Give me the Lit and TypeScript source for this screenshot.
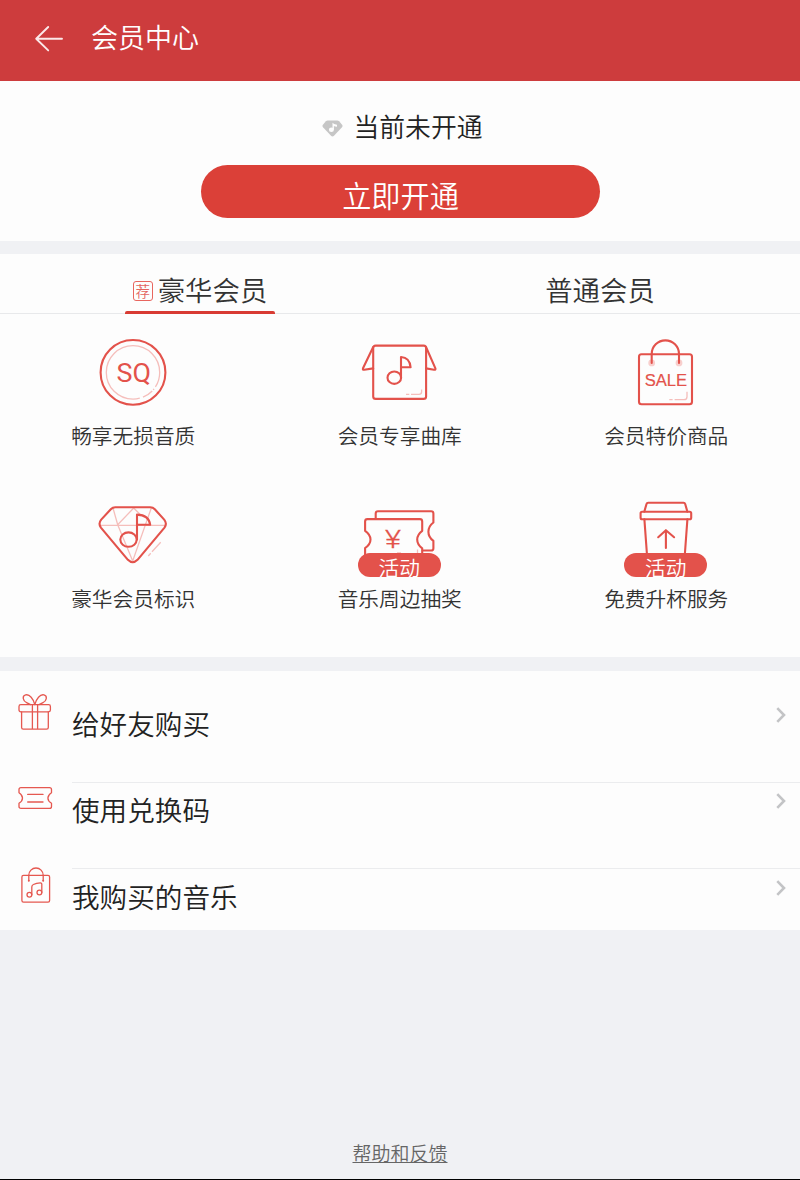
import { html, css, svg, LitElement, TemplateResult } from 'lit';
import { customElement, property, state } from 'lit/decorators.js';
import { classMap } from 'lit/directives/class-map.js';

const privilegeIcons: Record<string, TemplateResult> = {
  sq: svg`
    <circle class="line" cx="40" cy="40.4" r="32.4" />
    <circle class="faint" cx="40" cy="40.4" r="26.7" pathLength="360"
      stroke-dasharray="33 5 3 3 24 7 285 0" />
    <text class="sq" x="23.6" y="49.6" textLength="34.5" lengthAdjust="spacingAndGlyphs">SQ</text>
  `,
  library: svg`
    <path class="line" d="M13.2 15 3 36.3Q2.4 38 4.2 37.8L13.2 36.4M66 15l9.4 21.3q.5 1.7-1.3 1.4L66 36.4" />
    <rect class="line" x="13.2" y="13.6" width="52.9" height="53.3" rx="2.5" />
    <ellipse class="line" cx="34.3" cy="45.7" rx="6.8" ry="6.2" />
    <path class="line" d="M41 45.7V25q8.8.6 9.6 10.3H41" />
    <path class="faint" d="M46 62.3h3.3M51 62.3h8q2.6 0 2.6-2.6V57.5" />
  `,
  sale: svg`
    <rect class="line" x="13" y="22.2" width="53" height="50" rx="2.5" />
    <circle class="dot" cx="25.7" cy="30.9" r="3.4" />
    <circle class="dot" cx="53" cy="30.9" r="3.4" />
    <path class="line" d="M25.7 31V22a13.65 13.65 0 0 1 27.3 0v9" />
    <text class="sale" x="18.7" y="54.4" textLength="42.4" lengthAdjust="spacingAndGlyphs">SALE</text>
    <path class="faint" d="M43.3 67.7h3.3M48.6 67.7h9.4q3 0 3-3v-5" />
  `,
  diamond: svg`
    <path class="faint" d="M7 30.3H72M20 13l4.7 16.7L40.7 13l6 6M24.7 29.7 39.7 66 58.3 13" />
    <path class="line" d="M22.3 12.2H57.3q2.6 0 4.5 2L71.2 24.6q3.2 4 .3 8L44.5 64.8q-4.8 4.8-9.6 0L7.9 32.6q-2.9-4 .3-8L17.8 14.2q1.9-2 4.5-2Z" />
    <ellipse class="line" cx="35.5" cy="44.6" rx="8.2" ry="7.2" />
    <path class="line" d="M44 44.6V19.6q12 .4 13.2 10.2H44" />
    <path class="faint" d="M67.7 47.3 59 56.7M57.7 58.3 55.3 61" />
  `,
  ticket: svg`
    <path class="line" d="M15.7 23V18.5q0-2.3 2.3-2.3H71.1q2.3 0 2.3 2.3V27.5q-5 3.8-5 9.2t5 9.2V53.2q0 2.3-2.3 2.3H62.7" />
    <path class="line" d="M5.1 62V53q5.4-3.8 5.4-8.6T5.1 35.8V26.4q0-2.3 2.3-2.3H59.9q2.3 0 2.3 2.3v9.4q-5 3.8-5 8.8t5 8.8V62" />
    <path class="faint" d="M57.5 58v-3.5M37 58h4" />
    <text class="yen" x="25" y="53.2" textLength="16" lengthAdjust="spacingAndGlyphs">¥</text>
  `,
  cup: svg`
    <path class="line" d="M18.3 16.7 20.5 9q.4-1.2 1.6-1.2H57.6q1.2 0 1.6 1.2l2.2 7.7" />
    <rect class="line" x="14.6" y="16.8" width="50.6" height="7.4" rx="1.5" />
    <path class="line" d="M18.4 24.3 21 60M61.4 24.3 58.8 60" />
    <path class="line" d="M39.9 53V35.3M32.2 42.2l7.7-6.9 8.2 6.9" />
  `,
};

const serviceIcons: Record<string, TemplateResult> = {
  gift: svg`
    <rect x="2" y="12.7" width="31.4" height="7.1" rx="1.8" />
    <path d="M4.6 19.8V35.5q0 1.7 1.7 1.7H29.6q1.7 0 1.7-1.7V19.8M15.4 12.7V37.2M20.6 12.7V37.2" />
    <path d="M17.8 12.6C16.5 7 12.5 1.8 8.6 2.9S6 9 9.6 10.6L13.5 12.6M17.8 12.6C19.2 7 23.2 1.8 27 2.9S29.6 9 26 10.6L22 12.6" />
  `,
  code: svg`
    <path d="M4 9.6H32.5q2 0 2 2v3.1q-3.6 2.2-3.6 5.3t3.6 5.3v3.1q0 2-2 2H4q-2 0-2-2V25.3q3.5-2.2 3.5-5.3T2 14.7V11.6q0-2 2-2Z" />
    <path d="M10.7 16.4H26M10.7 24H26" />
  `,
  music: svg`
    <rect x="4.9" y="10.4" width="27.7" height="26.7" rx="1.6" />
    <path d="M11.8 15.6V10.2a7.2 7.2 0 0 1 14.4 0v5.4" />
    <circle class="knob" cx="11.8" cy="15.8" r="1" />
    <circle class="knob" cx="26.2" cy="15.8" r="1" />
    <circle cx="12.4" cy="29.8" r="2.4" />
    <circle cx="22.4" cy="27.5" r="2.4" />
    <path d="M14.8 29.8V22q0-1.8 1.6-2.5 3-1.6 7-1.6 1.4 0 1.4 1V27.5" />
  `,
};

@customElement('privilege-item')
export class PrivilegeItem extends LitElement {
  static styles = css`
    :host {
      display: flex;
      flex-direction: column;
      align-items: center;
      height: 163px;
    }

    .art {
      position: relative;
      width: 80px;
      height: 80px;
    }

    svg {
      display: block;
    }

    .line {
      fill: none;
      stroke: #e3524b;
      stroke-width: 2.1;
      stroke-linecap: round;
      stroke-linejoin: round;
    }

    .faint {
      fill: none;
      stroke: #f5bebb;
      stroke-width: 1.3;
    }

    .dot {
      fill: #f8cfcd;
    }

    text {
      fill: #e3524b;
    }

    .sq {
      font: 400 25px Roboto, 'Liberation Sans', sans-serif;
    }

    .sale {
      font: 16.3px 'Liberation Sans', sans-serif;
      stroke: #e3524b;
      stroke-width: 0.2;
    }

    .yen {
      font: 300 26.5px Roboto, 'Liberation Sans', sans-serif;
      stroke: #e3524b;
      stroke-width: 0.3;
    }

    .badge {
      position: absolute;
      left: -2px;
      top: 58.5px;
      width: 83px;
      height: 24px;
      border-radius: 12px;
      background: #e3524b;
      color: #fff;
      font-size: 20.7px;
      line-height: 28px;
      text-align: center;
    }

    .label {
      margin-top: 8px;
      font-size: 20.7px;
      line-height: 30px;
      color: #333;
      white-space: nowrap;
    }
  `;

  @property() icon = '';
  @property() label = '';
  @property() badge = '';

  render() {
    return html`
      <div class="art">
        <svg width="80" height="80" viewBox="0 0 80 80">
          ${privilegeIcons[this.icon]}
        </svg>
        ${this.badge ? html`<span class="badge">${this.badge}</span>` : ''}
      </div>
      <div class="label">${this.label}</div>
    `;
  }
}

@customElement('service-row')
export class ServiceRow extends LitElement {
  static styles = css`
    :host {
      display: flex;
      align-items: flex-start;
      height: 86.4px;
    }

    .icon {
      flex: none;
      width: 36px;
      height: 40px;
      margin: -3.7px 19px 0 17px;
      fill: none;
      stroke: #e55850;
      stroke-width: 1.3;
      stroke-linecap: round;
      stroke-linejoin: round;
    }

    .knob {
      fill: #e55850;
      stroke: none;
    }

    .body {
      flex: 1;
      display: flex;
      justify-content: space-between;
      align-items: flex-start;
      padding-right: 14px;
      border-top: 1px solid #ebecee;
    }

    :host([first]) .body {
      border-top-color: transparent;
    }

    .label {
      margin-top: 5.4px;
      font-size: 27.6px;
      line-height: 42px;
      color: #222;
    }

    .chevron {
      width: 10px;
      height: 16px;
      margin-top: 10.5px;
      fill: none;
      stroke: #c3c4c6;
      stroke-width: 2.6;
    }
  `;

  @property() icon = '';
  @property() label = '';

  render() {
    return html`
      <svg class="icon" viewBox="0 0 36 40">${serviceIcons[this.icon]}</svg>
      <div class="body">
        <span class="label">${this.label}</span>
        <svg class="chevron" viewBox="0 0 10 16">
          <path d="M1.3 1.2 8 8l-6.7 6.8" />
        </svg>
      </div>
    `;
  }
}

@customElement('app-root')
export class AppRoot extends LitElement {
  static styles = css`
    :host {
      display: flex;
      flex-direction: column;
      box-sizing: border-box;
      width: 800px;
      height: 1180px;
      background: #f0f1f4;
      font-family: 'Noto Sans CJK SC', 'Liberation Sans', sans-serif;
      font-weight: 350;
      overflow: hidden;
    }

    header {
      display: flex;
      height: 81px;
      flex: none;
      background: #cd3c3d;
      color: #fff;
    }

    .back {
      width: 30px;
      height: 30px;
      margin: 24px 27px 0 34px;
      fill: none;
      stroke: #fbe9e9;
      stroke-width: 1.9;
      stroke-linecap: round;
      stroke-linejoin: round;
    }

    h1 {
      margin: 16px 0 0;
      font-size: 27px;
      font-weight: inherit;
      line-height: 42px;
    }

    section {
      flex: none;
      background: #fdfdfd;
    }

    .status {
      display: flex;
      flex-direction: column;
      align-items: center;
      height: 159.5px;
      margin-bottom: 13px;
    }

    .state {
      display: flex;
      align-items: center;
      gap: 11px;
      margin: 25px 0 0 4px;
      font-size: 25.8px;
      line-height: 40px;
      color: #222;
    }

    .state svg {
      margin-top: 4px;
    }

    .open {
      width: 399px;
      height: 53px;
      margin: 19px 0 0 1px;
      padding: 0;
      border: 0;
      border-radius: 27px;
      background: #db4038;
      color: #fff;
      font: inherit;
      font-size: 29.2px;
      line-height: 59px;
    }

    .plans {
      height: 403.5px;
      margin-bottom: 13.5px;
    }

    .tabs {
      display: flex;
      height: 60px;
      box-sizing: border-box;
      border-bottom: 1px solid #e8e9eb;
    }

    .tab {
      flex: 1;
      display: flex;
      flex-direction: column;
      align-items: center;
    }

    .title {
      flex: none;
      display: flex;
      align-items: center;
      gap: 5px;
      height: 44px;
      padding-top: 13px;
      font-size: 27.4px;
      line-height: 44px;
      color: #333;
      white-space: nowrap;
    }

    .active::after {
      content: '';
      flex: none;
      width: 150px;
      height: 3px;
      border-radius: 2px 2px 0 0;
      background: #d83b33;
    }

    .tag {
      width: 18px;
      height: 18px;
      margin-top: 5px;
      border: 1px solid #e8665f;
      border-radius: 3px;
      color: #e3645e;
      font-size: 14.5px;
      line-height: 18px;
      text-align: center;
    }

    .grid {
      display: grid;
      grid-template-columns: repeat(3, 1fr);
      padding: 18px 0.5px 0 0;
    }

    .services {
      height: 234.5px;
      padding-top: 25px;
      overflow: hidden;
    }

    footer {
      display: flex;
      flex: 1;
      flex-direction: column;
      justify-content: flex-end;
      align-items: center;
    }

    .help {
      margin-bottom: 11px;
      font-size: 19px;
      line-height: 30px;
      color: #666;
      text-decoration: underline;
      text-decoration-thickness: 1px;
    }

    .edge {
      width: 100%;
      height: 1px;
      background: linear-gradient(90deg, #000 510px, #222 510px, #222 630px, #000 630px);
    }
  `;

  @state() private activeTab = 0;

  private tabs = [
    { label: '豪华会员', tag: '荐' },
    { label: '普通会员', tag: '' },
  ];

  private privileges = [
    { icon: 'sq', label: '畅享无损音质', badge: '' },
    { icon: 'library', label: '会员专享曲库', badge: '' },
    { icon: 'sale', label: '会员特价商品', badge: '' },
    { icon: 'diamond', label: '豪华会员标识', badge: '' },
    { icon: 'ticket', label: '音乐周边抽奖', badge: '活动' },
    { icon: 'cup', label: '免费升杯服务', badge: '活动' },
  ];

  private services = [
    { icon: 'gift', label: '给好友购买' },
    { icon: 'code', label: '使用兑换码' },
    { icon: 'music', label: '我购买的音乐' },
  ];

  render() {
    return html`
      <header>
        <svg class="back" viewBox="0 0 30 30">
          <path d="M28 14.8H2.2M14.2 3 2.2 14.8 14.2 26.4" />
        </svg>
        <h1>会员中心</h1>
      </header>

      <section class="status">
        <div class="state">
          <svg width="21" height="17" viewBox="0 0 21 17">
            <path fill="#c6c6c6" d="M5.6.5h9.8q1 0 1.7.7l3 3.6q.9 1.2-.1 2.4L12 15.7q-1.5 1.4-3 0L1 7.2Q0 6 .9 4.8l3-3.6Q4.6.5 5.6.5Z" />
            <ellipse cx="9.4" cy="9.7" rx="2.5" ry="2.2" fill="#fdfdfd" />
            <path fill="#fdfdfd" d="M10.5 9.7V2.7q1 1.7 4.5 2.1v2Q13 6.6 11.9 5.9V9.7Z" />
          </svg>
          <span>当前未开通</span>
        </div>
        <button class="open">立即开通</button>
      </section>

      <section class="plans">
        <div class="tabs">${this.tabs.map((t, i) => this.renderTab(t, i))}</div>
        <div class="grid">
          ${this.privileges.map(
            p => html`<privilege-item
              .icon=${p.icon}
              .label=${p.label}
              .badge=${p.badge}
            ></privilege-item>`
          )}
        </div>
      </section>

      <section class="services">
        ${this.services.map(
          (s, i) => html`<service-row
            ?first=${i === 0}
            .icon=${s.icon}
            .label=${s.label}
          ></service-row>`
        )}
      </section>

      <footer>
        <span class="help">帮助和反馈</span>
        <div class="edge"></div>
      </footer>
    `;
  }

  renderTab(tab: { label: string; tag: string }, index: number) {
    return html`
      <div
        class=${classMap({ tab: true, active: index === this.activeTab })}
        @click=${() => (this.activeTab = index)}
      >
        <div class="title">
          ${tab.tag ? html`<span class="tag">${tab.tag}</span>` : ''}
          <span>${tab.label}</span>
        </div>
      </div>
    `;
  }
}
